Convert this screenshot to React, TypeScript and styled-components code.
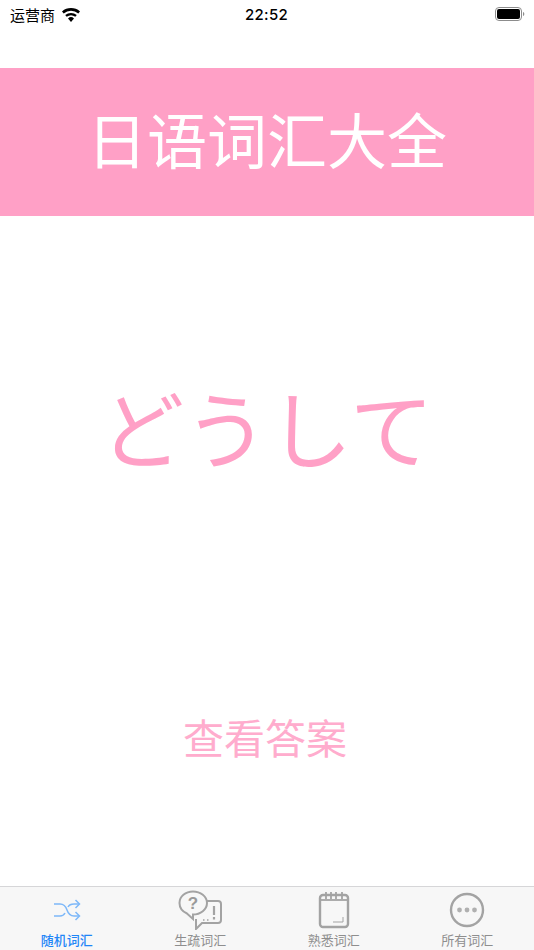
import { ReactNode } from "react";
import styled, { createGlobalStyle } from "styled-components";

const GlobalStyle = createGlobalStyle`
  html, body {
    margin: 0;
    padding: 0;
    background: #fff;
    font-family: "Noto Sans CJK SC", "Liberation Sans", sans-serif;
  }
`;

const Screen = styled.div`
  width: 534px;
  height: 950px;
  display: flex;
  flex-direction: column;
  overflow: hidden;
  background: #fff;
`;

const StatusBar = styled.div`
  height: 28px;
  margin-bottom: 40px;
  display: grid;
  grid-template-columns: 1fr auto 1fr;
  align-items: center;
  padding: 0 9px 0 10px;
  color: #000;
`;

const Carrier = styled.div`
  display: flex;
  align-items: center;
  gap: 6px;
  font-size: 15px;
`;

const Clock = styled.div`
  font-family: "Inter", "Liberation Sans", sans-serif;
  font-size: 15px;
  font-weight: 500;
  letter-spacing: 0.3px;
  margin-left: -2px;
`;

const Battery = styled.div`
  justify-self: end;
  display: flex;
`;

const Header = styled.div`
  height: 148px;
  padding-bottom: 8px;
  box-sizing: border-box;
  background: #ffa0c6;
  color: #fff;
  display: flex;
  align-items: center;
  justify-content: center;
  font-size: 60px;
  line-height: 1;
`;

const Main = styled.div`
  flex: 1;
  display: flex;
  flex-direction: column;
  align-items: center;
  color: #ffa0c6;
`;

const Word = styled.div`
  margin-top: 168px;
  font-size: 84px;
  line-height: 84px;
  font-family: "Noto Sans CJK JP", "Noto Sans CJK SC", sans-serif;
  font-weight: 400;
`;

const Reveal = styled.button`
  margin-top: 244px;
  border: 0;
  background: none;
  padding: 0;
  color: #ffaccd;
  font-family: inherit;
  font-size: 41px;
  line-height: 48px;
  margin-left: -4px;
`;

const TabBar = styled.div`
  height: 63px;
  border-top: 1px solid #d6d6d8;
  background: #f7f7f7;
  display: grid;
  grid-template-columns: repeat(4, 1fr);
`;

const TabItem = styled.div<{ $active?: boolean }>`
  display: flex;
  flex-direction: column;
  align-items: center;
  color: ${({ $active }) => ($active ? "#1f86f7" : "#8e8e8e")};
  font-weight: ${({ $active }) => ($active ? 500 : 400)};
`;

const TabIcon = styled.div`
  height: 45px;
  display: flex;
  align-items: center;
  justify-content: center;
`;

const TabLabel = styled.div`
  font-size: 13px;
  line-height: 16px;
`;

const Tab = ({
  label,
  active,
  children,
}: {
  label: string;
  active?: boolean;
  children: ReactNode;
}) => (
  <TabItem $active={active}>
    <TabIcon>{children}</TabIcon>
    <TabLabel>{label}</TabLabel>
  </TabItem>
);

const ShuffleIcon = () => (
  <svg width="28" height="22" viewBox="0 0 28 22" fill="none" stroke="#7db8f9" strokeWidth="1.5">
    <path d="M1 5h6c4 0 6 3 7 6s3 6 7 6h5" />
    <path d="M1 17h6c2.500 0 4-1 5-3M15 8c1-2 3-3 6-3h5" />
    <path d="M22.500 1l4 4-4 4M22.500 13l4 4-4 4" />
  </svg>
);

const QuestionIcon = () => (
  <svg width="44" height="40" viewBox="0 0 44 40" fill="none" stroke="#a3a3a3" strokeWidth="2">
    <path d="M15 1.500C7.500 1.500 1.500 6.500 1.500 13c0 4.500 3 8.500 7.500 10.500l6 5.500v-4.500c7.500 0 14-5 14-11.500S22.500 1.500 15 1.500z" />
    <path d="M29 11h11a3 3 0 0 1 3 3v16a3 3 0 0 1-3 3H24l-6 6v-10" />
    <text x="15" y="19" fontSize="17" fontWeight="700" fill="#9a9a9a" stroke="none" textAnchor="middle" fontFamily="Liberation Sans">?</text>
    <path d="M36 16v9M36 27v2.500" strokeWidth="2.200" />
    <path d="M25 30h1.500M29 30h1.500" strokeWidth="1.500" />
  </svg>
);

const NotebookIcon = () => (
  <svg width="32" height="38" viewBox="0 0 32 38" fill="none" stroke="#a3a3a3" strokeWidth="2.400">
    <rect x="2" y="4" width="28" height="32" rx="3" />
    <path d="M2 9h28" strokeWidth="1.800" />
    <path d="M8 1v7M13 1v7M18 1v7M24 1v7" strokeWidth="1.800" />
    <path d="M15 31h10v-5" strokeWidth="1" />
  </svg>
);

const MoreIcon = () => (
  <svg width="36" height="36" viewBox="0 0 36 36" fill="none">
    <circle cx="18" cy="18" r="16" stroke="#a3a3a3" strokeWidth="2.400" />
    <circle cx="10.500" cy="18" r="2.400" fill="#b0b0b0" />
    <circle cx="18" cy="18" r="2.400" fill="#b0b0b0" />
    <circle cx="25.500" cy="18" r="2.400" fill="#b0b0b0" />
  </svg>
);

const WifiIcon = () => (
  <svg width="20" height="15" viewBox="0 0 20 15" fill="#000">
    <path d="M10 15l-3-3.600a4.500 4.500 0 0 1 6 0z" />
    <path d="M5.700 9.800a7 7 0 0 1 8.600 0l1.500-1.800a9.500 9.500 0 0 0-11.600 0z" />
    <path d="M2.700 6.400a11.500 11.500 0 0 1 14.600 0l1.700-2a14 14 0 0 0-18 0z" />
  </svg>
);

const BatteryIcon = () => (
  <svg width="30" height="14" viewBox="0 0 30 14">
    <rect x="0.500" y="0.500" width="26" height="13" rx="3.500" fill="none" stroke="#8c8c8c" />
    <rect x="2" y="2" width="23" height="10" rx="2" fill="#000" />
    <path d="M28 5v4c.8-.3 1.300-1 1.300-2s-.5-1.700-1.300-2z" fill="#8c8c8c" />
  </svg>
);

const App = () => (
  <Screen>
    <GlobalStyle />
    <StatusBar>
      <Carrier>
        运营商
        <WifiIcon />
      </Carrier>
      <Clock>22:52</Clock>
      <Battery>
        <BatteryIcon />
      </Battery>
    </StatusBar>
    <Header>日语词汇大全</Header>
    <Main>
      <Word>どうして</Word>
      <Reveal>查看答案</Reveal>
    </Main>
    <TabBar>
      <Tab label="随机词汇" active>
        <ShuffleIcon />
      </Tab>
      <Tab label="生疏词汇">
        <QuestionIcon />
      </Tab>
      <Tab label="熟悉词汇">
        <NotebookIcon />
      </Tab>
      <Tab label="所有词汇">
        <MoreIcon />
      </Tab>
    </TabBar>
  </Screen>
);

export default App;
